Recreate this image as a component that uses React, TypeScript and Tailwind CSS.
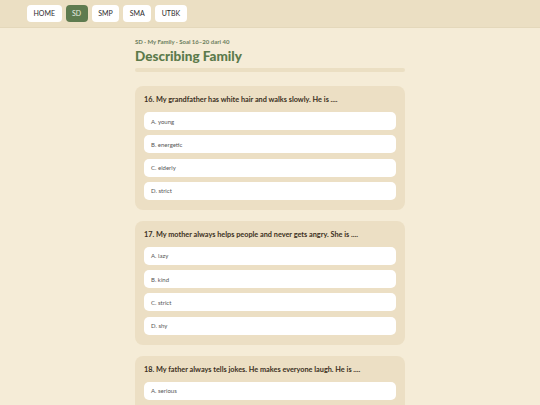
import React from "react";

interface Question {
  no: number;
  text: string;
  options: string[];
}

const questions: Question[] = [
  {
    no: 16,
    text: "My grandfather has white hair and walks slowly. He is ....",
    options: ["young", "energetic", "elderly", "strict"],
  },
  {
    no: 17,
    text: "My mother always helps people and never gets angry. She is ....",
    options: ["lazy", "kind", "strict", "shy"],
  },
  {
    no: 18,
    text: "My father always tells jokes. He makes everyone laugh. He is ....",
    options: ["serious", "funny", "quiet", "angry"],
  },
];

const levels = ["HOME", "SD", "SMP", "SMA", "UTBK"];
const letters = ["A", "B", "C", "D"];

const App: React.FC = () => {
  return (
    <div className="min-h-screen bg-[#f5ecd7] font-['Lato',sans-serif]">
      {/* Top nav */}
      <div className="h-[28px] bg-[#ebdfc3] border-b border-[#e4d8bb] flex items-center gap-[4px] px-[27px]">
        {levels.map((lvl) => (
          <div
            key={lvl}
            className={`h-[17px] px-[6.5px] rounded-[4px] text-[7px] leading-none flex items-center ${
              lvl === "SD"
                ? "bg-[#5e7b4f] text-[#e9efe3]"
                : "bg-white text-[#2b2b2b]"
            }`}
          >
            {lvl}
          </div>
        ))}
      </div>

      <div className="w-[270px] mx-auto pt-[10px] pb-6">
        <p className="text-[6px] font-bold text-[#6d7f5e] leading-[8px]">
          SD · My Family · Soal 16–20 dari 40
        </p>
        <h1 className="text-[13.5px] font-black text-[#5b7a4b] leading-[18px] mt-[1px]">
          Describing Family
        </h1>
        <div className="h-[4px] rounded-full bg-[#ebdfc3] mt-[3px]" />

        <div className="mt-[14px] flex flex-col gap-[11px]">
          {questions.map((q) => (
            <div
              key={q.no}
              className="rounded-[8px] bg-[#ecdfc4] px-[9px] pt-[9px] pb-[10px]"
            >
              <p className="text-[7.3px] font-bold text-[#3b2f22] leading-[10px] mb-[7px]">
                {q.no}. {q.text}
              </p>
              <div className="flex flex-col gap-[5.3px]">
                {q.options.map((opt, i) => (
                  <div
                    key={opt}
                    className="h-[18px] rounded-[5px] bg-white flex items-center px-[7px] text-[6px] text-[#555]"
                  >
                    {letters[i]}. {opt}
                  </div>
                ))}
              </div>
            </div>
          ))}
        </div>
      </div>
    </div>
  );
};

export default App;
